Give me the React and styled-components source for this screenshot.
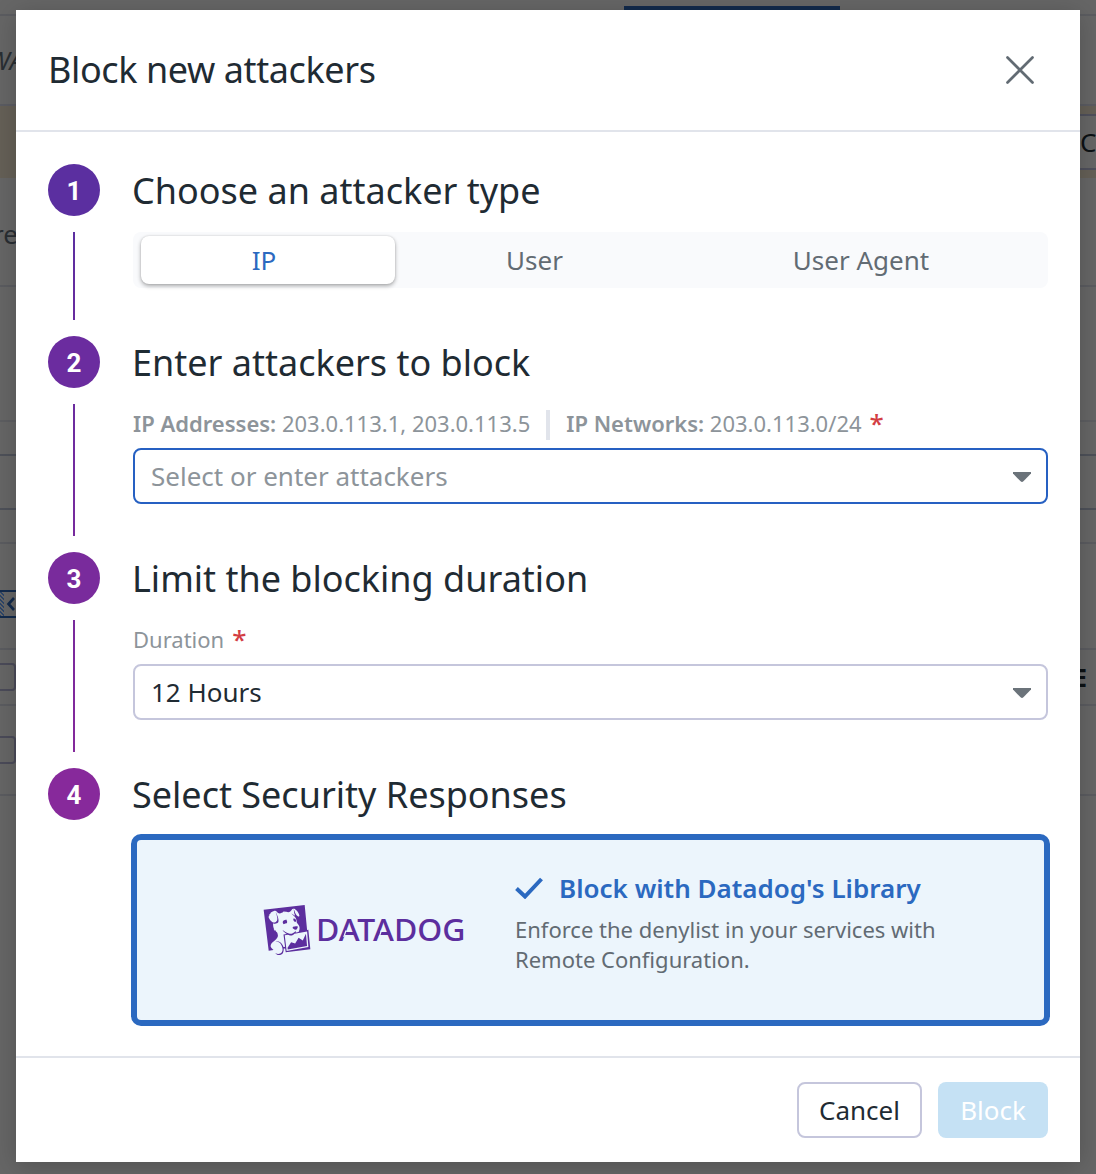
import React from "react";
import styled, { createGlobalStyle } from "styled-components";
import { SiDatadog } from "react-icons/si";

const Global = createGlobalStyle`
  *, *::before, *::after { box-sizing: border-box; }
  body {
    margin: 0;
    background: #666;
    font-family: "Noto Sans", sans-serif;
    font-size: 26px;
    color: #1f2b33;
  }
  button { font: inherit; color: inherit; }
`;

const Screen = styled.div`
  position: relative;
  width: 1096px;
  height: 1174px;
  overflow: hidden;
`;

/* Dimmed page behind the dialog */
const Page = styled.div`
  display: flex;
  flex-direction: column;
  height: 100%;
  background: #666;
`;

const PageRow = styled.div`
  display: flex;
  align-items: center;
  justify-content: space-between;
  flex: none;
  height: ${(p) => p.$height}px;
  padding-top: ${(p) => p.$offset || 0}px;
  border-bottom: ${(p) => (p.$line ? `2px solid ${p.$line}` : "none")};
  background: ${(p) => p.$fill || "transparent"};
  color: #292e33;
  line-height: 36px;
`;

const ActiveTab = styled.div`
  align-self: flex-end;
  width: 216px;
  height: 8px;
  margin-left: 624px;
  background: #122a4c;
`;

const ClippedText = styled.div`
  display: flex;
  justify-content: flex-end;
  width: ${(p) => p.$width}px;
  white-space: nowrap;
  font-style: ${(p) => (p.$italic ? "italic" : "normal")};
`;

const PageButton = styled.div`
  width: 26px;
  height: 56px;
  padding-left: 8px;
  border: 2px solid #4f505c;
  border-right: 0;
  background: #666;
  color: #0c1114;
  line-height: 52px;
`;

const Marker = styled.div`
  display: flex;
  align-items: center;
  width: 24px;
  height: 28px;
  border: solid #122a4c;
  border-width: 2px 0;
`;

const Hatch = styled.div`
  width: 4px;
  height: 24px;
  background: repeating-linear-gradient(45deg, #2d4568 0 1px, #666 1px 2.8px);
`;

const PageCheckbox = styled.div`
  width: 16px;
  height: 28px;
  border: 2px solid #4b4b59;
  border-left: 0;
  border-radius: 0 4px 4px 0;
`;

const PageLetter = styled.div`
  width: 23px;
  font-size: 25px;
  font-weight: 700;
  color: #0c1114;
`;

/* Dialog */
const Dialog = styled.section`
  position: absolute;
  top: 10px;
  left: 16px;
  display: flex;
  flex-direction: column;
  width: 1064px;
  height: 1152px;
  background: #fff;
  box-shadow: 0 4px 24px rgba(0, 0, 0, 0.2);
`;

const Header = styled.header`
  display: flex;
  align-items: center;
  justify-content: space-between;
  height: 122px;
  padding: 0 44px 0 32px;
  border-bottom: 2px solid #e1e4eb;
`;

const Heading = styled.h1`
  margin: 0;
  font-size: 36px;
  font-weight: 400;
  line-height: 52px;
  letter-spacing: -0.4px;
`;

const CloseButton = styled.button`
  display: flex;
  padding: 0;
  border: 0;
  background: none;
`;

const Body = styled.div`
  flex: 1;
  padding: 32px 32px 0;
`;

const Step = styled.section`
  display: flex;
  gap: 33px;
  height: ${(p) => p.$height}px;
`;

const Rail = styled.div`
  display: flex;
  flex-direction: column;
  align-items: center;
  gap: 16px;
  width: 52px;
  padding-bottom: 16px;
`;

const Badge = styled.div`
  flex: none;
  width: 52px;
  height: 52px;
  border-radius: 50%;
  background: ${(p) => p.$color};
  color: #fff;
  font: 700 26px/54px Roboto, sans-serif;
  text-align: center;
`;

const Connector = styled.div`
  flex: 1;
  width: 2px;
  background: ${(p) => `linear-gradient(${p.$from}, ${p.$to})`};
`;

const StepContent = styled.div`
  display: flex;
  flex-direction: column;
  flex: 1;
`;

const StepTitle = styled.h2`
  height: 52px;
  margin: 0 0 0 -1px;
  font-size: 36px;
  font-weight: 400;
  line-height: 54px;
  white-space: nowrap;
`;

const Segments = styled.div`
  display: grid;
  grid-template-columns: 254px 286px 1fr;
  height: 56px;
  margin-top: 16px;
  padding: 4px 0 4px 8px;
  border-radius: 8px;
  background: #f9fafc;
`;

const Segment = styled.button`
  height: 48px;
  padding: 0 ${(p) => p.$inset}px 0 0;
  border: 0;
  border-radius: 8px;
  background: ${(p) => (p.$active ? "#fff" : "transparent")};
  box-shadow: ${(p) =>
    p.$active ? "0 2px 4px rgba(0,0,0,.32), 0 0 2px rgba(0,0,0,.14)" : "none"};
  color: ${(p) => (p.$active ? "#2b69c0" : "#626b73")};
  line-height: 48px;
`;

const FieldLabel = styled.div`
  display: flex;
  align-items: center;
  height: 40px;
  margin-top: 15px;
  margin-bottom: 5px;
  font-size: 22px;
  line-height: 40px;
  color: #8d949a;
  white-space: pre;
  b { font-weight: 600; }
`;

const LabelDivider = styled.span`
  width: 4px;
  height: 30px;
  margin: 3px 16px 0;
  background: #e1e4eb;
`;

const Required = styled.span`
  height: 41px;
  margin-left: 8px;
  font-size: 26px;
  font-weight: 500;
  color: #d33d43;
`;

const SelectBox = styled.div`
  display: flex;
  align-items: center;
  justify-content: space-between;
  height: 56px;
  padding: 0 15px 0 16px;
  border: 2px solid ${(p) => (p.$focused ? "#2660c2" : "#c5c6dc")};
  border-radius: 8px;
  color: ${(p) => (p.$placeholder ? "#8d949a" : "#1f2b33")};
`;

const CaretIcon = styled.svg`
  width: 18px;
  height: 10px;
  margin-top: 2px;
`;

const Card = styled.div`
  display: grid;
  grid-template-columns: 378px 1fr;
  align-items: center;
  height: 192px;
  margin: 14px -2px 0;
  border: 6px solid #2b69c0;
  border-radius: 10px;
  background: #ecf5fc;
`;

const Brand = styled.div`
  display: flex;
  align-items: center;
  justify-content: flex-end;
  gap: 3px;
  padding-right: 46px;
  color: #5c2e9e;
`;

const CardBody = styled.div`
  padding-bottom: 16px;
`;

const CardText = styled.div`
  font-size: 22px;
  line-height: 30px;
  color: #626b73;
`;

const CardTitle = styled.div`
  display: flex;
  align-items: center;
  gap: 16px;
  height: 36px;
  margin-bottom: 8px;
  font-size: 26px;
  font-weight: 600;
  color: #2b69c0;
`;

const Footer = styled.footer`
  display: flex;
  align-items: center;
  justify-content: flex-end;
  gap: 16px;
  height: 106px;
  padding: 0 32px;
  border-top: 2px solid #e1e4eb;
`;

const Button = styled.button`
  width: ${(p) => p.$width}px;
  height: 56px;
  padding: 0;
  border: ${(p) => (p.$primary ? "0" : "2px solid #c5c6dc")};
  border-radius: 8px;
  background: ${(p) => (p.$primary ? "#c5e1f4" : "#fff")};
  color: ${(p) => (p.$primary ? "#fff" : "#1f2b33")};
`;

const Caret = () => (
  <CaretIcon viewBox="0 0 18 10">
    <path d="M0 0H18V1.6L10.4 9.3Q9 10.6 7.6 9.3L0 1.6Z" fill="#6b737a" />
  </CaretIcon>
);

const Wordmark = () => (
  <svg width="154" height="44" viewBox="-4 -5 154 44">
    <text x="-3" y="28" textLength="149.5" fill="currentColor" fontFamily="Noto Sans, sans-serif" fontSize="31" fontWeight="540" lengthAdjust="spacingAndGlyphs">
      DATADOG
    </text>
    <path d="M27 17.5L24.8 24M62.4 17.5L60.2 24" stroke="#ecf5fc" strokeWidth="1.2" />
  </svg>
);

export default function App() {
  return (
    <Screen>
      <Global />
      <Page>
        <PageRow $height={16} $line="#5b5c60"><ActiveTab /></PageRow>
        <PageRow $height={90} $line="#5b5c62"><ClippedText $width={24} $italic>WA</ClippedText></PageRow>
        <PageRow $height={72} $fill="#656057"><span /><PageButton>C</PageButton></PageRow>
        <PageRow $height={109} $offset={4} $line="#5b5c60"><ClippedText $width={18}>re</ClippedText></PageRow>
        <PageRow $height={135} $line="#5d5e61" />
        <PageRow $height={34} $line="#4e5159" />
        <PageRow $height={54} $line="#4e5159" />
        <PageRow $height={34} $line="#5b5c60" />
        <PageRow $height={106} $offset={16} $line="#5b5c60">
          <Marker>
            <Hatch />
            <svg width="12" height="16" viewBox="0 0 12 16">
              <path d="M10 2L4.5 8L10 14" fill="none" stroke="#122a4c" strokeWidth="2.6" />
            </svg>
          </Marker>
        </PageRow>
        <PageRow $height={56} $line="#5b5c60"><PageCheckbox /><PageLetter>E</PageLetter></PageRow>
        <PageRow $height={90} $line="#5b5c60"><PageCheckbox /></PageRow>
      </Page>

      <Dialog>
        <Header>
          <Heading>Block new attackers</Heading>
          <CloseButton aria-label="Close">
            <svg width="32" height="32" viewBox="0 0 32 32">
              <path d="M3.5 3.5L28.5 28.5M28.5 3.5L3.5 28.5" stroke="#626b73" strokeWidth="2.7" strokeLinecap="round" />
            </svg>
          </CloseButton>
        </Header>

        <Body>
          <Step $height={172}>
            <Rail>
              <Badge $color="#5b2fa0">1</Badge>
              <Connector $from="#5b2fa0" $to="#682b9e" />
            </Rail>
            <StepContent>
              <StepTitle>Choose an attacker type</StepTitle>
              <Segments>
                <Segment $active $inset={8}>IP</Segment>
                <Segment $inset={7}>User</Segment>
                <Segment $inset={7}>User Agent</Segment>
              </Segments>
            </StepContent>
          </Step>

          <Step $height={216}>
            <Rail>
              <Badge $color="#6b2c9f">2</Badge>
              <Connector $from="#6b2c9f" $to="#772a9d" />
            </Rail>
            <StepContent>
              <StepTitle>Enter attackers to block</StepTitle>
              <FieldLabel>
                <b>IP Addresses:</b> 203.0.113.1, 203.0.113.5
                <LabelDivider />
                <b>IP Networks:</b> 203.0.113.0/24
                <Required>*</Required>
              </FieldLabel>
              <SelectBox $focused $placeholder>Select or enter attackers<Caret /></SelectBox>
            </StepContent>
          </Step>

          <Step $height={216}>
            <Rail>
              <Badge $color="#792b9c">3</Badge>
              <Connector $from="#782a9c" $to="#84299b" />
            </Rail>
            <StepContent>
              <StepTitle>Limit the blocking duration</StepTitle>
              <FieldLabel>Duration<Required>*</Required></FieldLabel>
              <SelectBox>12 Hours<Caret /></SelectBox>
            </StepContent>
          </Step>

          <Step $height={260}>
            <Rail><Badge $color="#87299b">4</Badge></Rail>
            <StepContent>
              <StepTitle>Select Security Responses</StepTitle>
              <Card>
                <Brand><SiDatadog size={50} /><Wordmark /></Brand>
                <CardBody>
                  <CardTitle>
                    <svg width="28" height="22" viewBox="0 0 28 22">
                      <path d="M1.5 11.5L10 19.5L26.5 2" fill="none" stroke="#2b69c0" strokeWidth="4" />
                    </svg>
                    Block with Datadog's Library
                  </CardTitle>
                  <CardText>Enforce the denylist in your services with<br />Remote Configuration.</CardText>
                </CardBody>
              </Card>
            </StepContent>
          </Step>
        </Body>

        <Footer>
          <Button $width={125}>Cancel</Button>
          <Button $primary $width={110}>Block</Button>
        </Footer>
      </Dialog>
    </Screen>
  );
}
